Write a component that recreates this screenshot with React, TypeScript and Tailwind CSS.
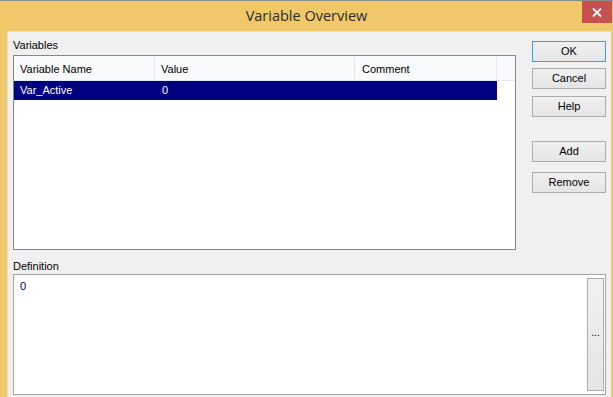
import React from 'react';

const buttons = [
  { label: 'OK', mt: 'mt-[9px]', primary: true },
  { label: 'Cancel', mt: 'mt-[6px]' },
  { label: 'Help', mt: 'mt-[7px]' },
  { label: 'Add', mt: 'mt-[24px]' },
  { label: 'Remove', mt: 'mt-[10px]' },
];

const DialogButton = ({ label, mt, primary }: { label: string; mt: string; primary?: boolean }) => (
  <button
    type="button"
    className={`${mt} h-[21px] w-[74px] border bg-gradient-to-b from-[#f0f0f0] to-[#e5e5e5] text-[11px] leading-none text-black ${
      primary ? 'border-[#3c9bea]' : 'border-[#acacac]'
    }`}
  >
    {label}
  </button>
);

const App = () => {
  return (
    <div className="flex h-[397px] w-[613px] flex-col overflow-hidden border-t border-[#8a8a8a] bg-[#f0c86a] font-['Liberation_Sans',Arial,sans-serif] text-[11px] text-black">
      {/* title bar */}
      <div className="flex h-[30px] shrink-0 items-start">
        <div className="w-[31px]" />
        <div className="flex h-[30px] flex-1 items-center justify-center pb-[1px] font-['Open_Sans',sans-serif] text-[14.5px] text-[#2b2b2b]">
          Variable Overview
        </div>
        <div className="flex h-[22px] w-[30px] items-center justify-center bg-[#c75050] text-white">
          <svg width="10" height="9" viewBox="0 0 10 9">
            <path d="M1 0.5 L9 8.5 M9 0.5 L1 8.5" stroke="white" strokeWidth="1.8" />
          </svg>
        </div>
        <div className="w-px" />
      </div>

      {/* client area */}
      <div className="ml-[7px] mr-[2px] flex flex-1 flex-col border-l border-t border-[#dcdcdc] bg-[#f0f0f0] pl-[5px]">
        <div className="flex">
          <div className="flex flex-col">
            <div className="h-[23px] pt-[8px] leading-none">Variables</div>
            <div className="h-[195px] w-[503px] border border-[#828790] bg-white">
              <div className="flex h-[25px] border-b border-[#e3e8f4] bg-[#f9fafc]">
                <div className="w-[141px] border-r border-[#e3e8f4] pl-[6px] pt-[5px]">Variable Name</div>
                <div className="w-[200px] border-r border-[#e3e8f4] pl-[6px] pt-[5px]">Value</div>
                <div className="w-[142px] border-r border-[#e3e8f4] pl-[7px] pt-[5px]">Comment</div>
              </div>
              <div className="flex h-[19px] w-[483px] bg-[#000080] text-white">
                <div className="w-[141px] pl-[6px] pt-px">Var_Active</div>
                <div className="pl-[7px] pt-px">0</div>
              </div>
            </div>
          </div>
          <div className="ml-[16px] flex flex-col">
            {buttons.map((b) => (
              <DialogButton key={b.label} {...b} />
            ))}
          </div>
        </div>

        <div className="h-[24px] pt-[11px] leading-none">Definition</div>
        <div className="flex h-[121px] w-[593px] border border-[#a5a5a5] bg-white">
          <div className="flex-1 pl-[6px] pt-[3px] text-[#000060]">0</div>
          <div className="my-[3px] mr-px flex w-[17px] items-center justify-center border border-[#acacac] bg-gradient-to-b from-[#f0f0f0] to-[#e5e5e5] pb-[4px] text-[10px] leading-none">
            ...
          </div>
        </div>
      </div>
    </div>
  );
};

export default App;
